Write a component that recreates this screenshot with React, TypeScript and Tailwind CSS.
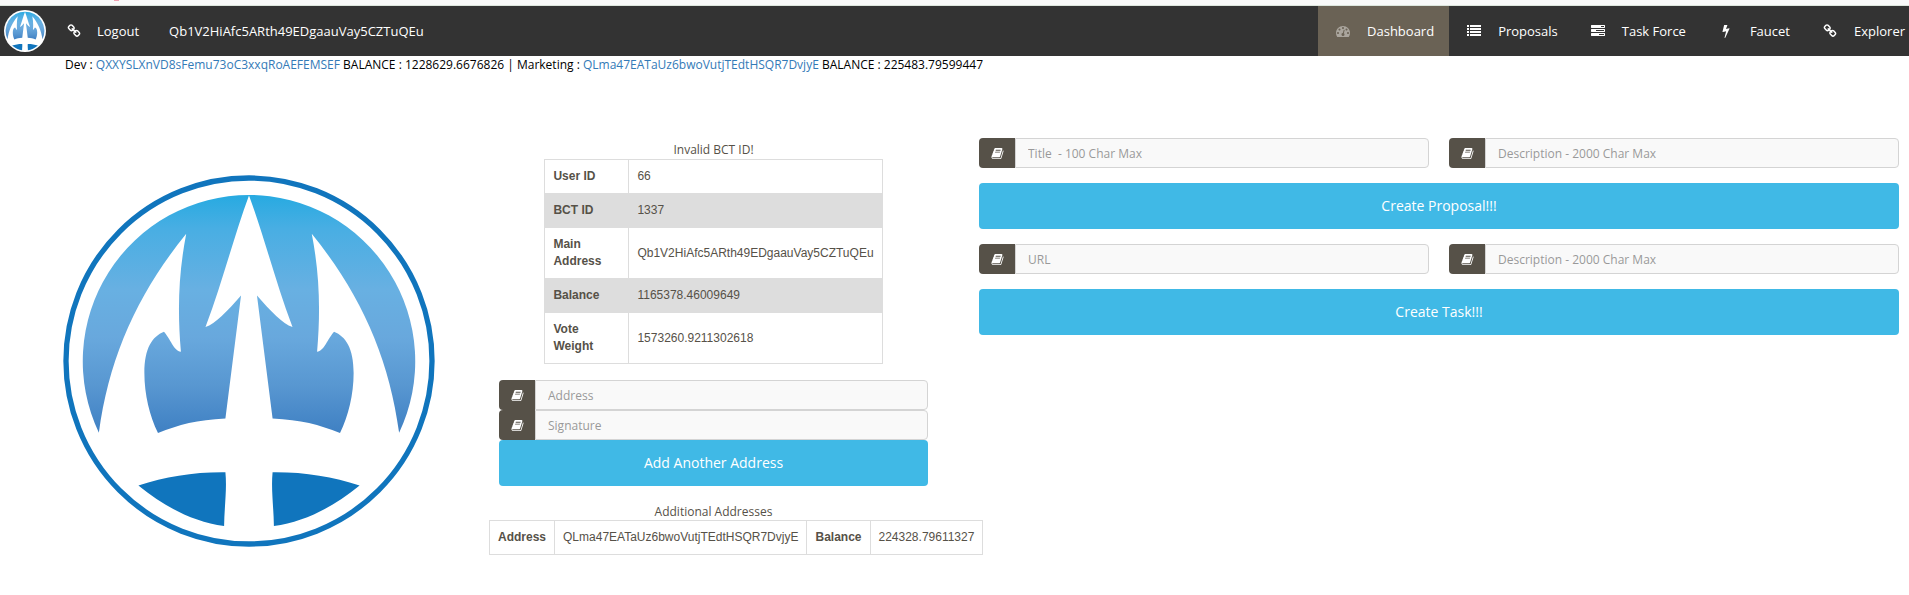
import React, { useId } from 'react';

const ICONS = {
  chain:
    'M1520 1216q0-40-28-68l-208-208q-28-28-68-28-42 0-72 32 3 3 19 18.5t21.5 21.5 15 19 13 25.5 3.5 27.5q0 40-28 68t-68 28q-15 0-27.5-3.5t-25.5-13-19-15-21.5-21.5-18.5-19q-33 31-33 73 0 40 28 68l206 207q27 27 68 27 40 0 68-26l147-146q28-28 28-67zm-703-705q0-40-28-68l-206-207q-28-28-68-28-39 0-68 27l-147 146q-28 28-28 67 0 40 28 68l208 208q27 27 68 27 42 0 72-31-3-3-19-18.5t-21.5-21.5-15-19-13-25.5-3.5-27.5q0-40 28-68t68-28q15 0 27.5 3.5t25.5 13 19 15 21.5 21.5 18.5 19q33-31 33-73zm895 705q0 120-85 203l-147 146q-83 83-203 83-121 0-204-85l-206-207q-83-83-83-203 0-123 88-209l-88-88q-86 88-208 88-120 0-204-84l-208-208q-84-84-84-204t85-203l147-146q83-83 203-83 121 0 204 85l206 207q83 83 83 203 0 123-88 209l88 88q86-88 208-88 120 0 204 84l208 208q84 84 84 204z',
  gauge:
    'M384 1152q0-53-37.5-90.5t-90.5-37.5-90.5 37.5-37.5 90.5 37.5 90.5 90.5 37.5 90.5-37.5 37.5-90.5zm192-448q0-53-37.5-90.5t-90.5-37.5-90.5 37.5-37.5 90.5 37.5 90.5 90.5 37.5 90.5-37.5 37.5-90.5zm428 481l101-382q6-26-7.5-48.5t-38.5-29.5-48 6.5-30 39.5l-101 382q-60 5-107 43.5t-63 98.5q-20 77 20 146t117 89 146-20 89-117q16-60-6-117t-72-91zm660-33q0-53-37.5-90.5t-90.5-37.5-90.5 37.5-37.5 90.5 37.5 90.5 90.5 37.5 90.5-37.5 37.5-90.5zm-640-640q0-53-37.5-90.5t-90.5-37.5-90.5 37.5-37.5 90.5 37.5 90.5 90.5 37.5 90.5-37.5 37.5-90.5zm448 192q0-53-37.5-90.5t-90.5-37.5-90.5 37.5-37.5 90.5 37.5 90.5 90.5 37.5 90.5-37.5 37.5-90.5zm320 448q0 261-141 483-19 29-54 29h-1402q-35 0-54-29-141-221-141-483 0-182 71-348t191-286 286-191 348-71 348 71 286 191 191 286 71 348z',
  list:
    'M0 128h256v256h-256zM0 512h256v256h-256zM0 896h256v256h-256zM0 1280h256v256h-256zM384 128h1408v256h-1408zM384 512h1408v256h-1408zM384 896h1408v256h-1408zM384 1280h1408v256h-1408z',
  tasks:
    'M1024 1408h640v-128h-640v128zm-384-512h1024v-128h-1024v128zm640-512h384v-128h-384v128zm512 832v256q0 26-19 45t-45 19h-1664q-26 0-45-19t-19-45v-256q0-26 19-45t45-19h1664q26 0 45 19t19 45zm0-512v256q0 26-19 45t-45 19h-1664q-26 0-45-19t-19-45v-256q0-26 19-45t45-19h1664q26 0 45 19t19 45zm0-512v256q0 26-19 45t-45 19h-1664q-26 0-45-19t-19-45v-256q0-26 19-45t45-19h1664q26 0 45 19t19 45z',
  bolt:
    'M1333 566q18 20 7 44l-540 1157q-13 25-42 25-4 0-14-2-17-5-25.5-19t-4.5-30l197-808-406 101q-4 1-12 1-18 0-31-11-18-15-13-39l201-825q4-14 16-23t28-9h328q19 0 32 12.5t13 29.5q0 8-5 18l-171 463 396-98q8-2 12-2 19 0 34 15z',
  book:
    'M1703 478q40 57 18 129l-275 906q-19 64-76.5 107.5t-122.5 43.5h-923q-77 0-148.5-53.5t-99.5-131.5q-24-67-2-127 0-4 3-27t4-37q1-8-3-21.5t-3-19.5q2-11 8-21t16.5-23.5 16.5-23.5q23-38 45-91.5t30-91.5q3-10 .5-30t-.5-28q3-11 17-28t17-23q21-36 42-92t25-90q1-9-2.5-32t.5-28q4-13 22-30.5t22-22.5q19-26 42.5-84.5t27.5-96.5q1-8-3-25.5t-2-26.5q2-8 9-18t18-23 17-21q8-12 16.5-30.5t15-35 16-36 19.5-32 26.5-23.5 36-11.5 47.5 5.5l-1 3q38-9 51-9h761q74 0 114 56t18 130l-274 906q-36 119-71.5 153.5t-128.5 34.5h-869q-27 0-38 15-11 16-1 43 24 70 144 70h923q29 0 56-15.5t35-41.5l300-987q7-22 5-57 38 15 59 43zm-1064 2q-4 13 2 22.5t20 9.5h608q13 0 25.5-9.5t16.5-22.5l21-64q4-13-2-22.5t-20-9.5h-608q-13 0-25.5 9.5t-16.5 22.5zm-83 256q-4 13 2 22.5t20 9.5h608q13 0 25.5-9.5t16.5-22.5l21-64q4-13-2-22.5t-20-9.5h-608q-13 0-25.5 9.5t-16.5 22.5z',
};

type IconName = keyof typeof ICONS;

const Icon: React.FC<{ name: IconName; className: string }> = ({ name, className }) => (
  <svg viewBox="0 0 1792 1792" fill="currentColor" className={className} aria-hidden="true">
    <path d={ICONS[name]} />
  </svg>
);

// The badge variant drops the outer ring and sits on a plain white disc
const TridentLogo: React.FC<{ className: string; badge?: boolean }> = ({ className, badge }) => {
  const id = useId();
  const half = (
    <>
      <path
        fill={`url(#${id})`}
        d="M596.5 104A501 501 0 0 0 144 820C175 590 262 400 407 221C384 340 380 450 391 576C370 575 358 535 340 516C305 530 281 565 281 640C281 705 297 770 322 821C385 795 440 781 525 777L572 407C530 455 495 492 465 502C515 370 550 230 596.5 104Z"
      />
      <path fill="#1075bd" d="M263 979C345 952 430 938 525 939C530 990 522 1040 521 1101C430 1088 345 1046 263 979Z" />
    </>
  );
  return (
    <svg viewBox={badge ? '54 62 1084 1084' : '36 44 1120 1120'} className={className} role="img" aria-label="Logo">
      <defs>
        <linearGradient id={id} gradientUnits="userSpaceOnUse" x1="0" y1="104" x2="0" y2="821">
          <stop offset="0" stopColor="#27aae1" />
          <stop offset="0.14" stopColor="#48aee3" />
          <stop offset="0.4" stopColor="#68b0e2" />
          <stop offset="0.6" stopColor="#68a8dd" />
          <stop offset="0.8" stopColor="#5897d1" />
          <stop offset="1" stopColor="#3f80c3" />
        </linearGradient>
      </defs>
      {badge ? (
        <circle cx="596" cy="604" r="542" fill="#fff" />
      ) : (
        <circle cx="596" cy="604" r="551" fill="#fff" stroke="#1075bd" strokeWidth="16" />
      )}
      {half}
      <g transform="translate(1192 0) scale(-1 1)">{half}</g>
    </svg>
  );
};

const NAV: { label: string; icon: IconName; active?: boolean }[] = [
  { label: 'Dashboard', icon: 'gauge', active: true },
  { label: 'Proposals', icon: 'list' },
  { label: 'Task Force', icon: 'tasks' },
  { label: 'Faucet', icon: 'bolt' },
  { label: 'Explorer', icon: 'chain' },
];

const USER_ROWS = [
  ['User ID', '66'],
  ['BCT ID', '1337'],
  ['Main Address', 'Qb1V2HiAfc5ARth49EDgaauVay5CZTuQEu'],
  ['Balance', '1165378.46009649'],
  ['Vote Weight', '1573260.9211302618'],
];

const Field: React.FC<{ id: string; placeholder: string }> = ({ id, placeholder }) => (
  <div className="flex h-[30px] w-full">
    <label htmlFor={id} className="flex w-9 shrink-0 items-center justify-center rounded-l bg-[#565148] text-white">
      <Icon name="book" className="size-[13px]" />
    </label>
    <input
      id={id}
      type="text"
      aria-label={placeholder}
      placeholder={placeholder}
      className="min-w-0 flex-1 rounded-r border border-[#d4d4d4] bg-[#f9f9f9] px-3 pt-0.5 text-xs placeholder:text-[#999]"
    />
  </div>
);

const SubmitButton: React.FC<{ children: React.ReactNode }> = ({ children }) => (
  <button type="submit" className="h-[46px] w-full rounded bg-[#40b9e6] text-sm text-white">
    {children}
  </button>
);

const Header: React.FC = () => (
  <header>
    <div className="h-[6px] border-b border-[#dde6dd] bg-[#f9f9f9] pl-[114px]">
      <div className="h-px w-[5px] bg-[#f0a0b0]"></div>
    </div>
    <nav className="flex h-[50px] items-center bg-[#333] text-[13px] text-white">
      <a href="#home" className="ml-1">
        <TridentLogo badge className="size-[42px]" />
      </a>
      <a href="#logout" className="ml-[21px] flex items-center">
        <Icon name="chain" className="size-[14px]" />
        <span className="ml-4">Logout</span>
      </a>
      <a href="#account" className="ml-[30px]">Qb1V2HiAfc5ARth49EDgaauVay5CZTuQEu</a>
      <ul className="ml-auto flex h-full">
        {NAV.map((item) => (
          <li key={item.label} className="group flex">
            <a
              href={`#${item.label}`}
              className={
                item.active
                  ? 'flex items-center bg-[#6a6255] px-[15px] whitespace-nowrap'
                  : 'flex items-center px-[15px] whitespace-nowrap group-last:pr-1'
              }
            >
              <span className={item.active ? 'flex w-5 justify-center text-[#aaa59d]' : 'flex w-5 justify-center'}>
                <Icon name={item.icon} className="size-[14px]" />
              </span>
              <span className="ml-[14px]">{item.label}</span>
            </a>
          </li>
        ))}
      </ul>
    </nav>
  </header>
);

export default function App() {
  return (
    <div className="bg-white font-['Open_Sans',sans-serif] text-xs leading-[17px] text-[#565148]">
      <Header />
      <p className="pl-[65px] text-black">
        Dev : <a href="#dev" className="text-[#337ab7]">QXXYSLXnVD8sFemu73oC3xxqRoAEFEMSEF</a> BALANCE : 1228629.6676826 |
        Marketing : <a href="#marketing" className="text-[#337ab7]">QLma47EATaUz6bwoVutjTEdtHSQR7DvjyE</a> BALANCE :
        225483.79599447
      </p>

      <main className="grid grid-cols-[93fr_92fr] gap-[33px] pt-[65px] pr-[10px] pl-4">
        <div className="grid min-w-0 grid-cols-2">
          <div className="flex items-start justify-center pt-[37px]">
            <TridentLogo className="w-4/5" />
          </div>

          {/* Account */}
          <div className="min-w-0 px-2 pt-[3px]">
            <p className="mb-px text-center">Invalid BCT ID!</p>
            <table className="mx-auto border-collapse border border-[#ddd] font-['Liberation_Sans',sans-serif]">
              <tbody>
                {USER_ROWS.map(([label, value]) => (
                  <tr key={label} className="even:bg-[#ddd]">
                    <th scope="row" className="w-[84px] border border-[#ddd] p-2 text-left font-bold">{label}</th>
                    <td className="border border-[#ddd] p-2 whitespace-nowrap">{value}</td>
                  </tr>
                ))}
              </tbody>
            </table>

            <form className="mt-4 px-[10px]">
              <Field id="address" placeholder="Address" />
              <Field id="signature" placeholder="Signature" />
              <SubmitButton>Add Another Address</SubmitButton>
            </form>

            <p className="mt-[17px] text-center">Additional Addresses</p>
            <table className="border-collapse border border-[#ddd] font-['Liberation_Sans',sans-serif] whitespace-nowrap">
              <tbody>
                <tr>
                  <th scope="row" className="border border-[#ddd] p-2 font-bold">Address</th>
                  <td className="border border-[#ddd] p-2">QLma47EATaUz6bwoVutjTEdtHSQR7DvjyE</td>
                  <th scope="row" className="border border-[#ddd] p-2 font-bold">Balance</th>
                  <td className="border border-[#ddd] p-2">224328.79611327</td>
                </tr>
              </tbody>
            </table>
          </div>
        </div>

        {/* Proposal and task forms */}
        <div className="flex flex-col gap-[15px]">
          <form className="flex flex-col gap-[15px]">
            <div className="flex gap-5">
              <Field id="title" placeholder="Title  - 100 Char Max" />
              <Field id="proposal-description" placeholder="Description - 2000 Char Max" />
            </div>
            <SubmitButton>Create Proposal!!!</SubmitButton>
          </form>
          <form className="flex flex-col gap-[15px]">
            <div className="flex gap-5">
              <Field id="url" placeholder="URL" />
              <Field id="task-description" placeholder="Description - 2000 Char Max" />
            </div>
            <SubmitButton>Create Task!!!</SubmitButton>
          </form>
        </div>
      </main>
    </div>
  );
}
